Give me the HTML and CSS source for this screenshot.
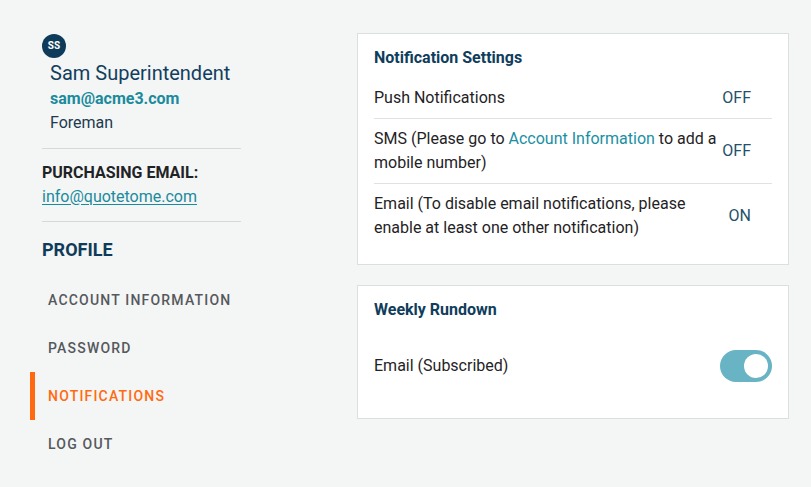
FILE: index.html
```html
<!DOCTYPE html>
<html lang="en">
<head>
<meta charset="utf-8">
<title>Notifications</title>
<link rel="stylesheet" href="styles.css">
</head>
<body>
<div class="page">
  <aside class="sidebar">
    <div class="user">
      <div class="avatar">SS</div>
      <div class="user-info">
        <div class="user-name">Sam Superintendent</div>
        <div class="user-email">sam@acme3.com</div>
        <div class="user-role">Foreman</div>
      </div>
    </div>
    <div class="purchasing">
      <div class="purchasing-label">PURCHASING EMAIL:</div>
      <a class="purchasing-link" href="#">info@quotetome.com</a>
    </div>
    <h2 class="profile-title">PROFILE</h2>
    <nav class="nav">
      <a class="nav-item" href="#">ACCOUNT INFORMATION</a>
      <a class="nav-item" href="#">PASSWORD</a>
      <a class="nav-item active" href="#">NOTIFICATIONS</a>
      <a class="nav-item" href="#">LOG OUT</a>
    </nav>
  </aside>
  <main class="main">
    <section class="card">
      <h3 class="card-title">Notification Settings</h3>
      <div class="setting">
        <div class="setting-label">Push Notifications</div>
        <div class="setting-status">OFF</div>
      </div>
      <div class="setting">
        <div class="setting-label">SMS (Please go to <a class="inline-link" href="#">Account Information</a> to add a mobile number)</div>
        <div class="setting-status">OFF</div>
      </div>
      <div class="setting last">
        <div class="setting-label">Email (To disable email notifications, please enable at least one other notification)</div>
        <div class="setting-status">ON</div>
      </div>
    </section>
    <section class="card card-weekly">
      <h3 class="card-title">Weekly Rundown</h3>
      <div class="weekly-row">
        <div class="setting-label">Email (Subscribed)</div>
        <div class="toggle on"><span class="knob"></span></div>
      </div>
    </section>
  </main>
</div>
</body>
</html>
```

FILE: styles.css
```css
* { box-sizing: border-box; }

html, body {
  margin: 0;
  padding: 0;
}

body {
  background: #f4f5f5;
  font-family: Roboto, "Liberation Sans", Arial, sans-serif;
  color: #222;
  font-size: 16px;
  line-height: 24px;
}

.page {
  display: flex;
  padding: 33px 22px 0 30px;
}

.sidebar {
  width: 211px;
  flex: none;
}

.user {
  margin-left: 12px;
  padding-bottom: 13px;
  border-bottom: 1px solid #d6d9db;
}

.avatar {
  margin-top: 1px;
  width: 24px;
  height: 24px;
  border-radius: 50%;
  background: #0e3b5a;
  color: #fff;
  font-size: 10px;
  font-weight: 700;
  line-height: 24px;
  text-align: center;
  letter-spacing: 0.2px;
}

.user-info {
  padding-left: 8px;
  margin-top: 2px;
}

.user-name {
  font-size: 20px;
  line-height: 26px;
  color: #123e5e;
  margin-bottom: 1px;
}

.user-email {
  font-weight: 700;
  color: #1a8b9d;
}

.user-role {
  color: #1d3a50;
}

.purchasing {
  margin-left: 12px;
  padding: 12px 0 12px;
  border-bottom: 1px solid #d6d9db;
}

.purchasing-label {
  font-weight: 700;
  color: #1f2326;
}

.purchasing-link {
  color: #1a8b9d;
  text-decoration: underline;
  text-underline-offset: 2px;
}

.profile-title {
  margin: 16px 0 14px 12px;
  font-size: 18px;
  line-height: 24px;
  font-weight: 700;
  color: #0f3b5a;
}

.nav {
  display: flex;
  flex-direction: column;
}

.nav-item {
  display: block;
  height: 48px;
  line-height: 48px;
  padding-left: 13px;
  border-left: 5px solid transparent;
  font-size: 14px;
  font-weight: 500;
  letter-spacing: 1.2px;
  white-space: nowrap;
  color: #55595d;
  text-decoration: none;
}

.nav-item.active {
  border-left-color: #ff6a10;
  color: #ff6a10;
}

.main {
  flex: 1;
  margin-left: 116px;
  display: flex;
  flex-direction: column;
  gap: 20px;
}

.card {
  background: #fff;
  border: 1px solid #dcdfe0;
  padding: 16px 16px 16px;
}

.card-title {
  margin: 0 0 12px;
  font-size: 16px;
  line-height: 16px;
  font-weight: 700;
  color: #0f3d5c;
}

.setting {
  display: flex;
  align-items: center;
  padding: 8px 0;
  border-bottom: 1px solid #dfe1e2;
}

.setting.last {
  border-bottom: none;
}

.setting-label {
  flex: 1;
  color: #1f2326;
}

.inline-link {
  color: #1a8fa3;
  text-decoration: none;
}

.setting-status {
  width: 54px;
  flex: none;
  text-align: right;
  padding-right: 21px;
  color: #24506b;
}

.card-weekly .card-title {
  margin-bottom: 16px;
}

.weekly-row {
  display: flex;
  align-items: center;
  padding: 16px 0 20px;
}

.toggle {
  width: 52px;
  height: 32px;
  border-radius: 16px;
  background: #68b4c4;
  display: flex;
  align-items: center;
  padding: 0 4px;
  flex: none;
}

.toggle.on {
  justify-content: flex-end;
}

.knob {
  width: 24px;
  height: 24px;
  border-radius: 50%;
  background: #fff;
}
```
